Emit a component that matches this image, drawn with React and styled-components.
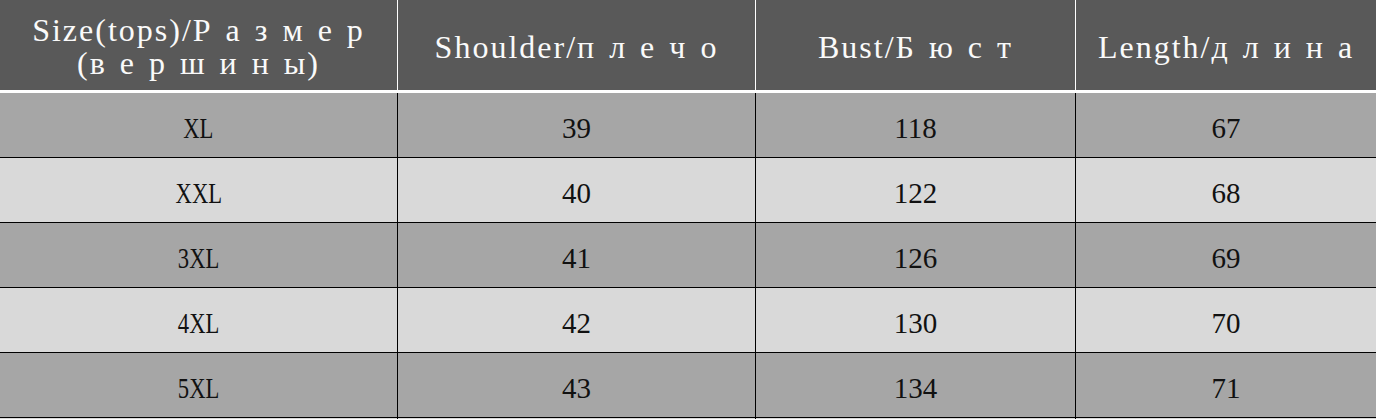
import { createGlobalStyle, styled } from "styled-components";

const GlobalStyle = createGlobalStyle`
    body {
        margin: 0;
        background: #d9d9d9;
    }
`

const rows = [
    ["XL", "39", "118", "67"],
    ["XXL", "40", "122", "68"],
    ["3XL", "41", "126", "69"],
    ["4XL", "42", "130", "70"],
    ["5XL", "43", "134", "71"],
];

export default function App() {
    return (
        <>
            <GlobalStyle />
            <Tabela>
                <Row $bg="#595959">
                    <HeadCell>
                        <HeadText>
                            Size(tops)/Р а з м е р
                            <br />
                            (в е р ш и н ы)
                        </HeadText>
                    </HeadCell>
                    <HeadCell><HeadText>Shoulder/п л е ч о</HeadText></HeadCell>
                    <HeadCell><HeadText>Bust/Б ю с т</HeadText></HeadCell>
                    <HeadCell><HeadText>Length/д л и н а</HeadText></HeadCell>
                </Row>
                {rows.map((r, i) => (
                    <Row key={r[0]} $bg={i % 2 === 0 ? "#a6a6a6" : "#d9d9d9"}>
                        {r.map((v, j) => (
                            <Cell key={j}>
                                <Valor $narrow={j === 0}>{v}</Valor>
                            </Cell>
                        ))}
                    </Row>
                ))}
                <Row $bg="#d9d9d9">
                    <Cell /><Cell /><Cell /><Cell />
                </Row>
            </Tabela>
        </>
    )
}

const Tabela = styled.div`
    width: 100%;
    display: flex;
    flex-direction: column;
`
const Row = styled.div`
    display: grid;
    grid-template-columns: 397px 358px 320px 1fr;
    background-color: ${(p) => p.$bg};
`
const HeadCell = styled.div`
    box-sizing: border-box;
    height: 93px;
    padding-top: 4px;
    display: flex;
    justify-content: center;
    align-items: center;
    text-align: center;
    border-bottom: 3px solid #ffffff;

    & + & {
        border-left: 1px solid #ffffff;
    }
`
const HeadText = styled.div`
    font-family: "Liberation Serif", "Times New Roman", serif;
    font-size: 32px;
    line-height: 33px;
    letter-spacing: 2px;
    word-spacing: 3px;
    color: #fafafa;
    white-space: nowrap;
`
const Cell = styled.div`
    box-sizing: border-box;
    height: 65px;
    padding-top: 7px;
    display: flex;
    justify-content: center;
    align-items: center;
    border-bottom: 1px solid #000000;

    & + & {
        border-left: 1px solid #000000;
    }
`
const Valor = styled.span`
    display: inline-block;
    font-family: "Liberation Serif", "Times New Roman", serif;
    font-size: 29px;
    color: #111111;
    transform: ${(p) => (p.$narrow ? "scaleX(0.78)" : "none")};
`
